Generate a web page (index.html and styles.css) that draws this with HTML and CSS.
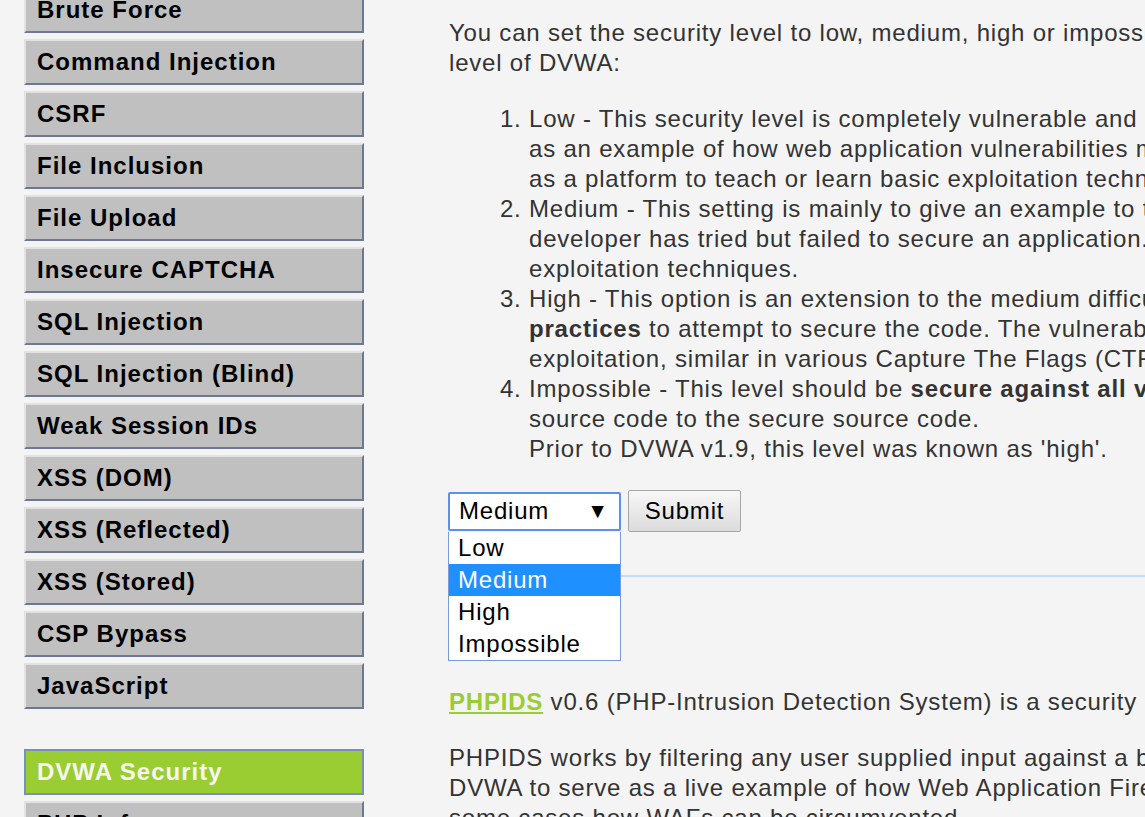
FILE: index.html
```html
<!DOCTYPE html>
<html lang="en">
<head>
<meta charset="utf-8">
<title>DVWA Security</title>
<link rel="stylesheet" href="styles.css">
</head>
<body>
<div class="page">
  <nav class="sidebar">
    <ul class="menu">
      <li><a href="#">Brute Force</a></li>
      <li><a href="#">Command Injection</a></li>
      <li><a href="#">CSRF</a></li>
      <li><a href="#">File Inclusion</a></li>
      <li><a href="#">File Upload</a></li>
      <li><a href="#">Insecure CAPTCHA</a></li>
      <li><a href="#">SQL Injection</a></li>
      <li><a href="#">SQL Injection (Blind)</a></li>
      <li><a href="#">Weak Session IDs</a></li>
      <li><a href="#">XSS (DOM)</a></li>
      <li><a href="#">XSS (Reflected)</a></li>
      <li><a href="#">XSS (Stored)</a></li>
      <li><a href="#">CSP Bypass</a></li>
      <li><a href="#">JavaScript</a></li>
    </ul>
    <ul class="menu">
      <li class="selected"><a href="#">DVWA Security</a></li>
      <li><a href="#">PHP Info</a></li>
      <li><a href="#">About</a></li>
    </ul>
  </nav>
  <main class="main">
    <p>You can set the security level to low, medium, high or impossible. The security level changes the vulnerability<br>level of DVWA:</p>
    <ol class="levels">
      <li>Low - This security level is completely vulnerable and has no security measures at all. It's use is to be<br>as an example of how web application vulnerabilities manifest through bad coding practices and to serve<br>as a platform to teach or learn basic exploitation techniques.</li>
      <li>Medium - This setting is mainly to give an example to the user of bad security practices, where the<br>developer has tried but failed to secure an application. It also acts as a challenge to users to refine their<br>exploitation techniques.</li>
      <li>High - This option is an extension to the medium difficulty, with a mixture of harder or alternative <b>bad</b><br><b>practices</b> to attempt to secure the code. The vulnerability may not allow the same extent of the<br>exploitation, similar in various Capture The Flags (CTFs) competitions.</li>
      <li>Impossible - This level should be <b>secure against all vulnerabilities</b>. It is used to compare the vulnerable<br>source code to the secure source code.<br>Prior to DVWA v1.9, this level was known as 'high'.</li>
    </ol>
    <form class="level-form">
      <div class="select">
        <div class="select-box"><span>Medium</span><span class="arrow">▼</span></div>
        <ul class="options">
          <li>Low</li>
          <li class="active">Medium</li>
          <li>High</li>
          <li>Impossible</li>
        </ul>
      </div>
      <button type="button" class="submit">Submit</button>
    </form>
    <hr class="rule">
    <p class="phpids"><a href="#" class="ids-link">PHPIDS</a> v0.6 (PHP-Intrusion Detection System) is a security layer for PHP based web applications.</p>
    <p>PHPIDS works by filtering any user supplied input against a blacklist of potentially malicious code. It is used in<br>DVWA to serve as a live example of how Web Application Firewalls (WAFs) can help improve security and in<br>some cases how WAFs can be circumvented.</p>
  </main>
</div>
</body>
</html>
```
FILE: styles.css
```css
html, body {
  margin: 0;
  padding: 0;
}

body {
  background: #f4f4f4;
  font-family: "Liberation Sans", Arial, sans-serif;
  overflow: hidden;
  height: 817px;
}

.page {
  display: flex;
  align-items: flex-start;
  margin-top: -13px;
}

.sidebar {
  flex: none;
  width: 340px;
  margin-left: 24px;
}

.menu {
  list-style: none;
  margin: 0;
  padding: 0;
  display: flex;
  flex-direction: column;
  gap: 6px;
}

.menu + .menu {
  margin-top: 40px;
}

.menu a {
  display: block;
  box-sizing: border-box;
  height: 46px;
  line-height: 42px;
  padding-left: 11px;
  background: #c0c0c0;
  border: 2px solid;
  border-color: #e2e2e2 #6b7a91 #6b7a91 #e2e2e2;
  color: #000;
  font-size: 24px;
  font-weight: bold;
  letter-spacing: 1px;
  text-decoration: none;
  white-space: nowrap;
}

.menu .selected a {
  background: #9acd32;
  border-color: #7890b8;
  color: #f6f6ee;
}

.main {
  flex: none;
  width: 1400px;
  margin-left: 85px;
  padding-top: 31px;
  color: #333;
  font-size: 24px;
  line-height: 30px;
  letter-spacing: 0.8px;
  white-space: nowrap;
}

.main p {
  margin: 0 0 26px;
}

.levels {
  margin: 0;
  padding-left: 80px;
}

.level-form {
  display: flex;
  align-items: center;
  margin-top: 26px;
  height: 42px;
}

.select {
  position: relative;
  width: 173px;
  margin-left: -1px;
}

.select-box {
  box-sizing: border-box;
  height: 39px;
  display: flex;
  align-items: center;
  justify-content: space-between;
  padding: 0 11px 0 9px;
  background: #fff;
  border: 2px solid #5b90ee;
  border-radius: 2px;
  color: #000;
  font-size: 24px;
}

.arrow {
  font-size: 21px;
  letter-spacing: 0;
}

.options {
  position: absolute;
  top: 40px;
  left: 0;
  box-sizing: border-box;
  width: 173px;
  margin: 0;
  padding: 0;
  list-style: none;
  background: #fff;
  border: 1px solid #7a9bd9;
  border-top: none;
  z-index: 2;
}

.options li {
  height: 32px;
  line-height: 32px;
  padding-left: 9px;
  color: #000;
  font-size: 24px;
}

.options .active {
  background: #1e90ff;
  color: #fff;
}

.submit {
  box-sizing: border-box;
  width: 113px;
  height: 42px;
  margin-left: 7px;
  padding: 0;
  border: 1px solid #a6a6a6;
  border-radius: 2px;
  background: linear-gradient(#f7f7f7, #dcdcdc);
  color: #000;
  font-family: "Liberation Sans", Arial, sans-serif;
  font-size: 24px;
  letter-spacing: 0.8px;
}

.rule {
  margin: 43px 0 0;
  height: 2px;
  border: none;
  background: #c4dbff;
}

.main .phpids {
  margin-top: 110px;
}

.ids-link {
  color: #9acd32;
  font-weight: bold;
  text-decoration: underline;
}
```
